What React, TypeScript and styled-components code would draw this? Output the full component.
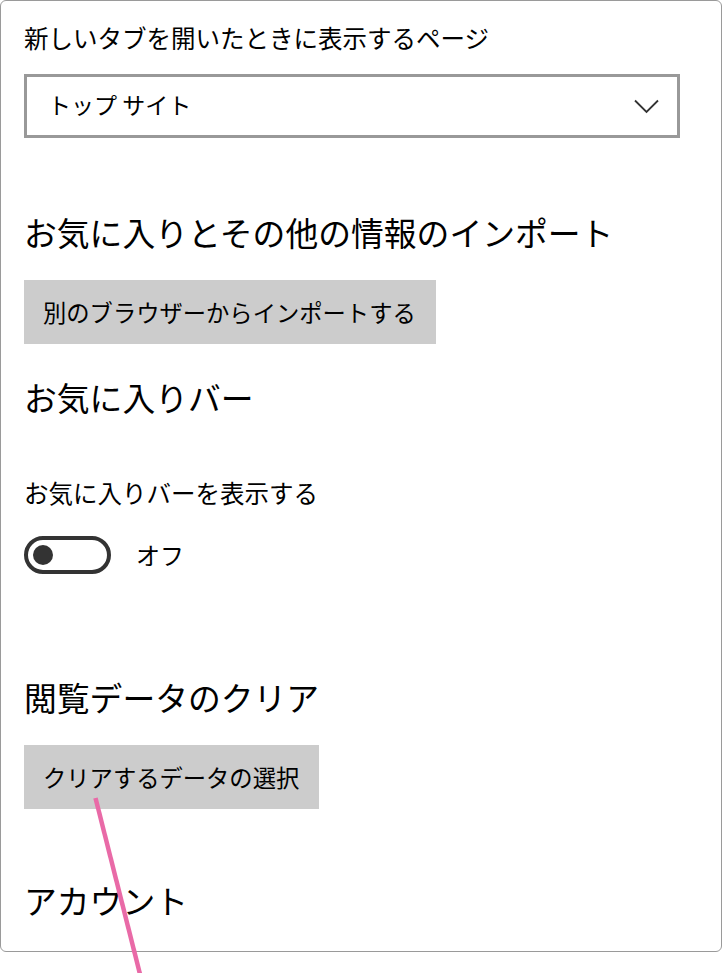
import React from "react";
import styled, { createGlobalStyle } from "styled-components";

const Global = createGlobalStyle`
  html, body { margin: 0; padding: 0; background: #ffffff; }
  body { font-family: "Noto Sans CJK JP", "Noto Sans", sans-serif; color: #000; }
  #root { position: relative; width: 722px; height: 973px; overflow: hidden; }
`;

const Panel = styled.div`
  box-sizing: border-box;
  width: 722px;
  height: 952px;
  border: 1px solid #9a9a9a;
  border-radius: 6px;
  padding: 21px 0 0 23px;
  display: flex;
  flex-direction: column;
  align-items: flex-start;
`;

const Label = styled.div<{ $mt?: number }>`
  margin-top: ${(p) => p.$mt ?? 0}px;
  font-size: 24.5px;
  line-height: 32px;
  height: 32px;
  white-space: nowrap;
`;

const Heading = styled.div<{ $mt: number }>`
  margin-top: ${(p) => p.$mt}px;
  font-size: 32.8px;
  line-height: 40px;
  height: 40px;
  white-space: nowrap;
`;

const Select = styled.div`
  box-sizing: border-box;
  margin-top: 20px;
  width: 656px;
  height: 64px;
  border: 3px solid #999999;
  background: #ffffff;
  display: flex;
  align-items: center;
  justify-content: space-between;
  padding: 0 18px 0 21px;
  font-size: 23px;
`;

const SelectText = styled.span`
  line-height: 30px;
  margin-top: -4px;
`;

const Button = styled.div<{ $mt: number }>`
  box-sizing: border-box;
  margin-top: ${(p) => p.$mt}px;
  height: 64px;
  background: #cccccc;
  display: flex;
  align-items: center;
  padding: 0 20px 0 19px;
  font-size: 23.3px;
  line-height: 30px;
  white-space: nowrap;
`;

const ToggleRow = styled.div`
  margin-top: 27px;
  display: flex;
  align-items: center;
  gap: 25px;
  height: 38px;
`;

const Track = styled.div`
  box-sizing: border-box;
  width: 87px;
  height: 38px;
  border: 4px solid #333333;
  border-radius: 19px;
  display: flex;
  align-items: center;
  padding-left: 5px;
`;

const Knob = styled.div`
  width: 20px;
  height: 20px;
  border-radius: 50%;
  background: #333333;
`;

const ToggleText = styled.span`
  font-size: 24px;
  line-height: 32px;
`;

const Overlay = styled.svg`
  position: absolute;
  left: 0;
  top: 0;
  pointer-events: none;
`;

const Chevron = () => (
  <svg width="25" height="15" viewBox="0 0 25 15" aria-hidden="true">
    <path d="M1 1.5 L12.5 13 L24 1.5" fill="none" stroke="#333" strokeWidth="1.8" />
  </svg>
);

export default function App() {
  return (
    <>
      <Global />
      <Panel>
        <Label>新しいタブを開いたときに表示するページ</Label>
        <Select>
          <SelectText>トップ サイト</SelectText>
          <Chevron />
        </Select>
        <Heading $mt={74}>お気に入りとその他の情報のインポート</Heading>
        <Button $mt={28}>別のブラウザーからインポートする</Button>
        <Heading $mt={33}>お気に入りバー</Heading>
        <Label $mt={60}>お気に入りバーを表示する</Label>
        <ToggleRow>
          <Track>
            <Knob />
          </Track>
          <ToggleText>オフ</ToggleText>
        </ToggleRow>
        <Heading $mt={103}>閲覧データのクリア</Heading>
        <Button $mt={28}>クリアするデータの選択</Button>
        <Heading $mt={71}>アカウント</Heading>
      </Panel>
      <Overlay width="722" height="973" viewBox="0 0 722 973">
        <line x1="95.5" y1="798" x2="141.5" y2="980" stroke="#e96aa7" strokeWidth="4.5" />
      </Overlay>
    </>
  );
}
